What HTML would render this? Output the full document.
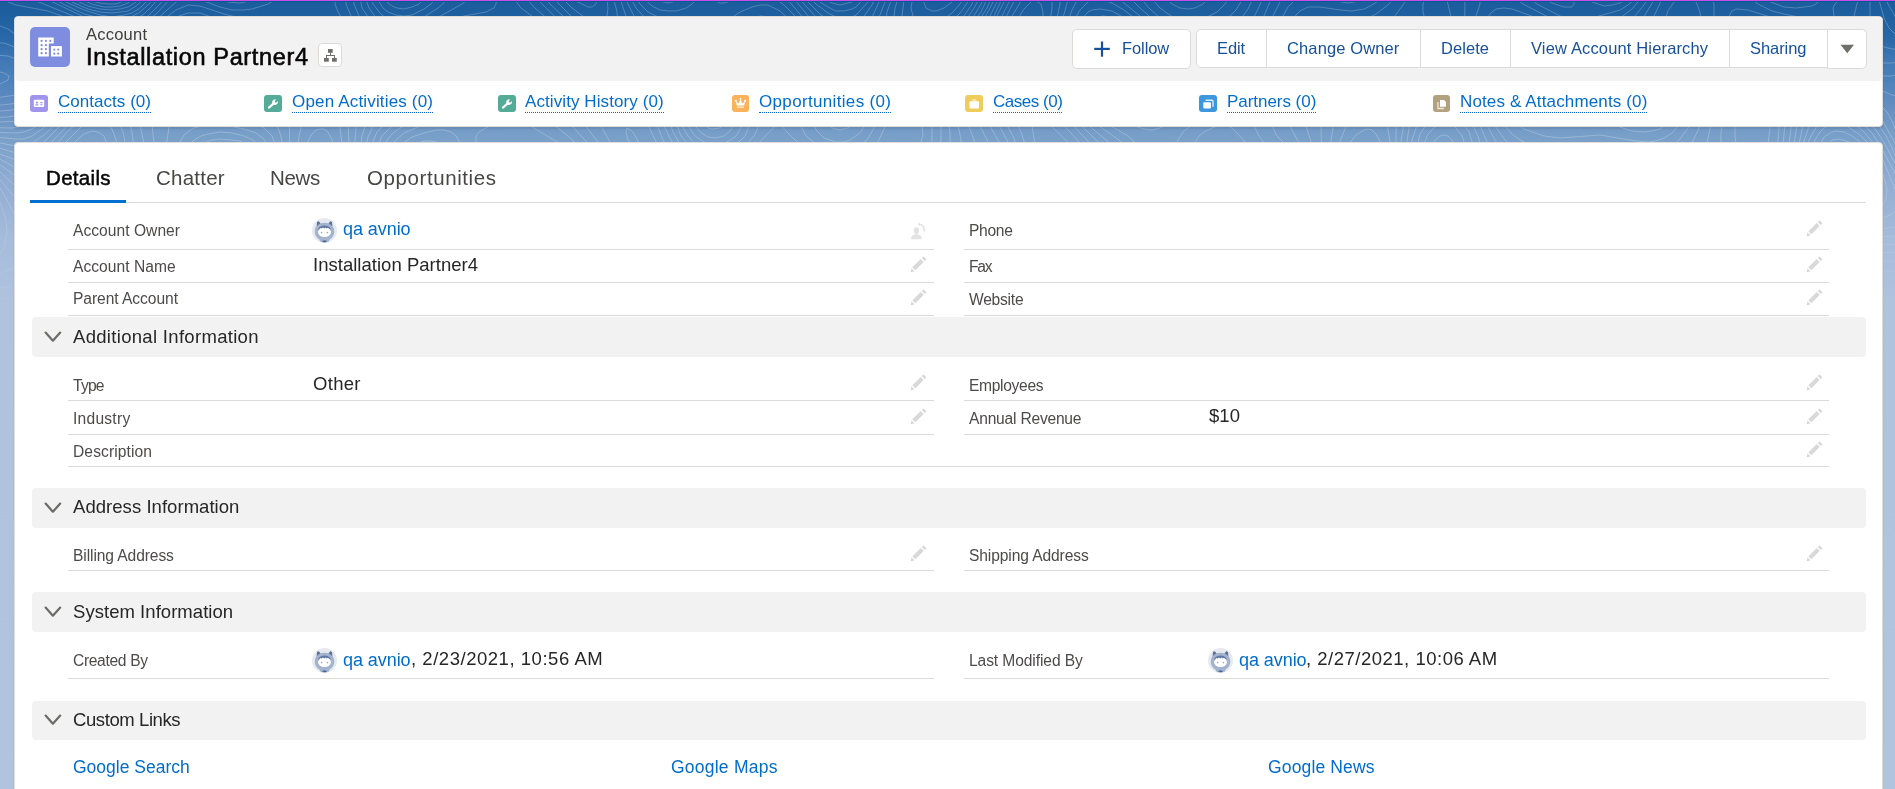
<!DOCTYPE html>
<html><head><meta charset="utf-8">
<style>
html,body{margin:0;padding:0;width:1895px;height:789px;overflow:hidden;font-family:"Liberation Sans",sans-serif;}
body{position:relative;background:linear-gradient(to bottom,#1a5c9c 0px,#1d5f9f 15px,#2a69a9 40px,#3f78b4 60px,#4c82bb 80px,#6890c2 110px,#779fc8 135px,#90acd2 180px,#a6bcdb 240px,#afc3df 300px,#b0c4df 789px);}
.a{position:absolute;}
.t{position:absolute;white-space:nowrap;will-change:transform;}
.card{position:absolute;background:#fff;border-radius:4px;box-shadow:0 2px 2px rgba(0,0,0,0.10);border:1px solid #e0dcd8;box-sizing:border-box;}
.div{position:absolute;height:1px;background:#dddbda;}
.sec{position:absolute;left:32px;width:1834px;height:40px;background:#f3f2f2;border-radius:4px;}
.btn{position:absolute;background:#fff;border:1px solid #dddbda;box-sizing:border-box;}
.vd{position:absolute;width:1px;background:#dddbda;}
.ico{position:absolute;border-radius:3px;}
</style></head><body>
<!--TOPO--><svg class="a" style="left:0;top:0" width="1895" height="340" viewBox="0 0 1895 340"><defs><linearGradient id="fg" x1="0" y1="0" x2="0" y2="1"><stop offset="0" stop-color="#fff" stop-opacity="1"/><stop offset="0.45" stop-color="#fff" stop-opacity="1"/><stop offset="0.95" stop-color="#fff" stop-opacity="0"/></linearGradient><mask id="fm"><rect width="1895" height="340" fill="url(#fg)"/></mask></defs><g mask="url(#fm)" fill="none" stroke="#ffffff" stroke-opacity="0.24" stroke-width="1"><path d="M83 -40 87 -32 92 -28 96 -26 104 -25 112 -28 116 -34 118 -40"/><path d="M78 -40 81 -32 88 -25 96 -21 104 -20 112 -22 116 -25 121 -32 122 -40"/><path d="M73 -40 76 -32 83 -24 92 -18 104 -16 112 -17 120 -23 125 -32 127 -40"/><path d="M1922 -40 1924 -35 1928 -33"/><path d="M69 -40 72 -31 80 -21 92 -15 104 -12 116 -15 123 -20 128 -28 130 -40"/><path d="M1914 -40 1916 -32 1919 -28 1924 -24 1928 -23"/><path d="M65 -40 69 -28 76 -20 90 -12 104 -9 116 -11 124 -16 131 -28 134 -40"/><path d="M1908 -40 1910 -32 1914 -24 1920 -19 1928 -16"/><path d="M60 -40 65 -28 76 -16 92 -8 108 -5 120 -9 128 -15 135 -28 137 -40"/><path d="M1903 -40 1906 -28 1912 -18 1920 -12 1928 -9"/><path d="M56 -40 60 -28 72 -16 80 -10 92 -5 108 -2 120 -5 130 -12 137 -24 140 -40"/><path d="M1899 -40 1901 -28 1908 -15 1916 -8 1928 -3"/><path d="M52 -40 54 -32 59 -24 72 -12 92 -2 108 1 120 -1 126 -4 132 -9 137 -16 141 -24 143 -40"/><path d="M1895 -40 1898 -24 1905 -12 1916 -1 1928 3"/><path d="M1073 208 1080 202 1086 192 1089 184 1089 172 1084 160 1078 152 1045 120 1040 112 1038 104 1036 69 1032 36 1031 32 1028 27 1024 28 1020 32 1008 52 1004 64 1004 80 1009 92 1026 112 1031 120 1037 156 1054 204 1060 211 1064 211 1073 208"/><path d="M48 -40 50 -32 54 -24 67 -12 88 -0 100 3 108 4 116 4 124 1 132 -4 136 -8 141 -16 144 -24 147 -40"/><path d="M826 -40 828 -33 832 -28 840 -26 844 -28 848 -31 852 -40"/><path d="M1890 -40 1892 -29 1895 -20 1904 -5 1916 6 1928 10"/><path d="M1195 8 1203 4 1210 -4 1211 -12 1208 -20 1200 -27 1192 -29 1180 -29 1172 -26 1166 -20 1164 -14 1164 -8 1168 -0 1172 4 1180 8 1188 9 1195 8"/><path d="M1067 224 1080 214 1091 200 1098 184 1099 172 1097 164 1092 156 1059 120 1050 104 1046 88 1042 60 1042 44 1043 12 1041 4 1036 1 1032 1 1024 9 1008 35 997 60 995 72 995 80 1000 96 1015 120 1021 132 1038 184 1044 212 1047 220 1051 224 1056 226 1060 226 1067 224"/><path d="M43 -40 45 -32 49 -24 57 -16 67 -8 80 -1 92 4 104 7 112 7 120 6 128 3 136 -3 140 -8 148 -24 150 -40"/><path d="M820 -40 821 -32 827 -24 832 -20 840 -18 846 -20 852 -25 856 -32 858 -40"/><path d="M1144 -40 1144 -24 1145 -16 1148 -8 1153 0 1160 8 1171 16 1180 19 1188 20 1200 19 1209 16 1217 12 1225 4 1230 -4 1233 -12 1233 -40"/><path d="M1886 -40 1890 -20 1900 -1 1912 12 1920 16 1928 17"/><path d="M1059 236 1068 232 1076 227 1093 208 1100 198 1105 188 1107 180 1107 172 1105 164 1100 154 1068 120 1060 108 1055 96 1050 76 1047 52 1048 36 1052 8 1052 0 1048 -11 1044 -14 1040 -16 1032 -12 1024 -4 1008 23 996 48 991 60 989 72 988 84 993 100 1013 136 1025 168 1032 192 1034 216 1036 224 1040 231 1044 234 1052 236 1059 236"/><path d="M38 -40 40 -32 44 -24 51 -16 62 -8 75 0 88 6 100 9 112 10 120 9 128 7 136 2 142 -4 150 -20 153 -40"/><path d="M815 -40 818 -28 823 -20 832 -14 840 -12 848 -14 856 -21 860 -28 863 -40"/><path d="M1126 -40 1127 -28 1131 -16 1139 -4 1149 8 1160 18 1171 24 1180 27 1192 28 1208 26 1220 22 1230 16 1236 10 1242 0 1246 -12 1249 -40"/><path d="M1882 -40 1883 -28 1886 -16 1892 -3 1899 8 1904 14 1912 21 1920 24 1928 25"/><path d="M1054 244 1064 242 1072 237 1080 230 1092 218 1102 204 1109 192 1113 180 1114 172 1112 160 1108 152 1072 116 1064 104 1059 92 1054 72 1052 48 1054 32 1060 4 1060 -8 1058 -16 1055 -24 1048 -33 1044 -36 1040 -35 1032 -26 1020 -9 1012 5 987 56 983 72 982 84 985 100 1007 140 1020 176 1023 192 1023 220 1025 228 1031 236 1036 240 1044 243 1054 244"/><path d="M33 -40 34 -32 39 -24 46 -16 56 -8 72 2 88 9 100 12 112 13 128 11 136 6 143 0 149 -8 154 -20 157 -40"/><path d="M810 -40 813 -28 820 -16 828 -10 840 -6 848 -8 858 -16 865 -28 867 -40"/><path d="M1027 -40 1022 -24 982 56 977 72 975 84 976 96 980 108 1000 144 1009 168 1014 188 1012 202 1008 209 1004 212 1000 212 972 193 964 190 956 190 944 193 935 200 928 209 923 220 919 232 918 248 918 260 922 272 928 284 932 287 936 288 940 287 948 283 964 270 992 243 1004 235 1012 236 1032 246 1044 250 1056 250 1068 246 1080 237 1096 220 1108 204 1117 188 1121 176 1122 168 1121 160 1118 152 1111 144 1088 125 1076 112 1066 96 1061 80 1057 60 1057 44 1059 32 1068 0 1070 -12 1065 -40"/><path d="M1110 -40 1112 -28 1118 -16 1128 -4 1140 8 1156 22 1168 30 1180 34 1192 35 1208 34 1224 30 1232 27 1240 20 1248 9 1254 -4 1258 -20 1260 -40"/><path d="M1877 -40 1878 -28 1882 -12 1888 4 1896 18 1902 24 1908 29 1916 32 1928 34"/><path d="M27 -40 28 -32 32 -24 39 -16 49 -8 68 3 84 10 100 15 112 17 124 15 132 13 140 8 148 0 153 -8 158 -20 162 -40"/><path d="M806 -40 808 -28 816 -14 828 -4 840 -1 848 -2 852 -4 860 -11 868 -24 872 -40"/><path d="M1020 -40 1018 -28 1013 -16 975 60 971 72 968 84 968 96 971 108 996 158 1000 172 1000 180 999 184 996 188 992 188 968 181 956 181 948 183 940 187 928 199 923 208 918 220 914 236 913 248 914 268 922 300 921 308 915 316 888 340 877 352 869 364 866 376"/><path d="M941 376 939 352 934 316 935 308 944 296 980 262 992 253 1000 249 1012 248 1036 254 1048 256 1060 254 1072 249 1088 235 1108 212 1119 196 1127 180 1130 164 1129 156 1126 148 1119 140 1092 121 1080 109 1071 96 1064 76 1062 52 1064 32 1072 10 1084 -13 1088 -17 1092 -18 1100 -15 1124 3 1156 29 1172 38 1180 41 1192 42 1224 40 1232 38 1240 34 1247 28 1252 21 1260 5 1266 -12 1270 -28 1271 -40"/><path d="M1329 -40 1332 -32 1336 -28 1344 -24 1352 -22 1360 -24 1367 -28 1372 -34 1374 -40"/><path d="M1873 -40 1874 -24 1878 -4 1884 18 1889 28 1896 35 1904 38 1916 41 1928 42"/><path d="M1308 284 1312 280 1316 270 1318 256 1317 240 1315 224 1312 208 1308 196 1300 181 1288 169 1260 154 1251 148 1232 128 1228 126 1220 125 1212 128 1204 132 1199 136 1194 144 1192 156 1206 212 1213 228 1220 236 1226 240 1252 253 1264 260 1292 283 1300 286 1308 284"/><path d="M1445 172 1451 168 1454 164 1456 152 1456 148 1452 140 1448 136 1444 135 1440 136 1435 140 1431 148 1430 156 1432 164 1436 170 1440 172 1445 172"/><path d="M20 -40 21 -32 25 -24 32 -16 44 -7 63 4 84 14 100 18 116 20 124 19 133 16 140 12 149 4 155 -4 161 -16 165 -28 167 -40"/><path d="M213 -40 216 -32 219 -28 224 -25 232 -22 240 -23 248 -28 252 -34 254 -40"/><path d="M561 -40 563 -32 568 -23 576 -15 580 -14 584 -15 586 -20 587 -40"/><path d="M802 -40 805 -24 812 -12 824 -1 832 3 840 5 852 2 864 -8 872 -24 876 -40"/><path d="M1015 -40 1013 -28 1007 -12 994 16 970 60 965 72 962 84 961 96 962 104 965 116 977 148 978 156 978 160 975 164 952 172 940 179 928 190 921 200 912 224 908 248 908 264 912 296 910 308 902 320 879 344 869 356 863 368 862 376"/><path d="M944 376 941 332 942 316 945 308 950 300 963 284 984 265 1000 256 1012 255 1040 260 1052 261 1064 258 1072 254 1088 241 1113 212 1127 192 1137 172 1141 156 1140 148 1137 144 1128 136 1104 122 1090 112 1079 100 1071 84 1067 64 1066 44 1072 24 1080 10 1088 2 1092 -0 1096 -1 1104 0 1112 3 1124 10 1160 38 1172 45 1188 48 1216 50 1240 53 1244 52 1248 49 1256 35 1279 -20 1285 -40"/><path d="M1313 -40 1314 -36 1319 -28 1329 -20 1340 -15 1352 -13 1363 -16 1372 -21 1380 -30 1384 -40"/><path d="M1764 -40 1765 -32 1769 -24 1776 -17 1784 -15 1788 -17 1792 -20 1795 -28 1797 -40"/><path d="M1867 -40 1870 0 1870 28 1872 35 1875 40 1884 47 1892 49 1928 50"/><path d="M-40 92 0 84 8 80 9 76 4 73 0 72 -40 74"/><path d="M1307 296 1312 293 1318 288 1322 280 1323 272 1322 244 1316 208 1308 186 1300 172 1288 159 1265 144 1259 136 1255 128 1254 120 1255 92 1252 83 1248 82 1244 84 1233 96 1224 104 1193 124 1183 132 1178 140 1177 144 1177 152 1192 186 1202 220 1206 228 1212 236 1222 244 1248 256 1260 264 1269 272 1284 288 1292 294 1300 297 1307 296"/><path d="M720 128 724 125 726 120 727 116 725 108 716 100 708 98 704 99 700 103 698 108 699 116 701 120 708 128 712 129 720 128"/><path d="M1452 184 1460 177 1464 169 1466 160 1466 148 1462 136 1456 128 1452 125 1444 123 1436 126 1428 134 1424 144 1422 160 1425 172 1432 182 1440 186 1444 186 1452 184"/><path d="M12 -40 14 -28 19 -20 27 -12 36 -6 84 17 100 22 116 23 128 22 136 19 144 14 152 6 160 -4 167 -16 172 -28 174 -40"/><path d="M200 -40 202 -32 205 -28 213 -20 224 -14 236 -13 248 -16 256 -22 263 -32 265 -40"/><path d="M551 -40 552 -32 555 -24 563 -12 576 1 588 7 592 7 596 4 597 0 598 -8 596 -40"/><path d="M797 -40 801 -24 805 -16 812 -6 820 2 828 7 836 11 844 11 852 9 856 7 868 -6 877 -24 880 -40"/><path d="M1011 -40 1008 -24 1000 -4 988 20 963 64 955 84 953 92 954 104 961 140 959 152 953 160 932 177 924 186 918 196 911 212 906 232 903 252 903 268 905 292 903 308 896 320 865 356 859 368 857 376"/><path d="M946 376 945 336 947 320 953 304 962 292 972 281 988 268 996 264 1004 261 1016 261 1040 265 1052 265 1064 263 1072 259 1084 250 1100 233 1125 204 1148 172 1156 166 1160 165 1168 167 1180 179 1188 194 1200 228 1205 236 1212 243 1220 248 1244 260 1256 267 1266 276 1283 296 1292 302 1300 305 1307 304 1316 300 1320 297 1324 292 1328 284 1330 272 1329 256 1323 224 1316 195 1305 168 1296 155 1277 136 1273 128 1272 116 1274 84 1267 52 1267 44 1268 32 1273 16 1280 2 1288 -11 1296 -18 1300 -19 1308 -19 1340 -6 1352 -5 1360 -7 1372 -12 1381 -20 1388 -29 1392 -40"/><path d="M1754 -40 1757 -24 1764 -13 1776 -5 1788 -2 1796 -4 1801 -8 1804 -12 1806 -20 1806 -40"/><path d="M1861 -40 1860 -8 1854 16 1853 24 1854 32 1860 44 1872 57 1884 63 1892 63 1928 58"/><path d="M1160 128 1152 130 1144 129 1112 119 1100 113 1092 107 1080 92 1072 72 1071 60 1071 48 1073 36 1076 28 1081 20 1088 12 1092 10 1100 9 1112 11 1128 20 1156 42 1168 50 1180 55 1210 60 1218 64 1221 68 1222 72 1222 80 1218 88 1212 96 1196 108 1160 128"/><path d="M-40 103 16 95 23 92 28 88 32 80 30 72 24 65 16 59 8 56 -4 55 -40 60"/><path d="M724 136 729 132 735 124 736 116 732 105 724 96 712 89 704 87 696 89 692 94 690 104 691 116 694 124 700 132 708 137 716 138 724 136"/><path d="M1457 196 1467 188 1472 180 1475 164 1474 148 1469 132 1460 120 1452 115 1448 114 1440 114 1432 118 1428 122 1420 134 1416 152 1418 168 1420 177 1424 186 1432 196 1436 198 1444 200 1457 196"/><path d="M798 376 797 364 792 352 786 340 780 333 768 323 736 308 724 300 710 284 691 248 684 240 676 235 640 218 600 191 576 180 560 175 544 175 532 177 504 187 492 187 484 184 476 178 466 168 452 151 444 144 432 141 424 141 416 144 408 149 402 156 389 196 381 208 368 224 364 232 362 240 363 248 368 264 372 270 380 277 388 281 396 281 400 278 404 272 410 252 416 240 423 232 429 228 452 218 484 206 496 206 508 212 524 225 541 244 556 268 562 280 564 288 565 296 562 304 556 312 540 328 535 336 532 348 531 376"/><path d="M2 -40 4 -28 7 -20 14 -12 24 -4 88 22 104 26 116 27 132 24 148 16 160 4 176 -18 184 -25 188 -26 192 -24 210 -12 220 -8 232 -5 240 -5 252 -8 263 -16 273 -28 277 -40"/><path d="M543 -40 547 -24 552 -15 560 -4 572 8 584 17 592 22 600 23 605 20 607 16 608 8 602 -40"/><path d="M793 -40 794 -32 798 -20 808 -4 816 4 828 13 836 17 844 19 852 17 856 15 868 2 880 -20 883 -32 884 -40"/><path d="M1007 -40 1002 -20 992 4 980 27 954 68 947 84 945 100 950 132 950 144 943 156 918 184 909 204 902 232 898 252 898 268 899 292 896 308 887 324 860 356 854 368 852 376"/><path d="M949 376 948 340 951 320 954 312 961 300 976 283 992 271 1004 267 1016 266 1052 270 1064 268 1072 264 1080 259 1092 248 1144 189 1152 182 1160 179 1168 181 1172 184 1179 192 1184 200 1196 231 1205 244 1216 252 1240 263 1252 270 1263 280 1284 305 1292 309 1304 311 1314 308 1324 301 1331 292 1335 284 1336 276 1335 264 1324 212 1316 182 1306 156 1291 128 1288 120 1285 80 1278 44 1279 28 1283 16 1288 7 1295 0 1300 -3 1312 -5 1336 1 1348 3 1360 1 1372 -4 1383 -12 1391 -20 1398 -32 1400 -40"/><path d="M1745 -40 1747 -28 1749 -20 1754 -12 1760 -5 1768 1 1776 4 1784 7 1796 8 1812 6 1816 4 1820 0 1821 -4 1816 -40"/><path d="M1853 -40 1852 -24 1849 -12 1844 -5 1835 4 1833 8 1834 16 1837 24 1852 50 1860 60 1868 68 1876 74 1884 76 1892 76 1916 69 1928 67"/><path d="M1696 36 1700 28 1701 20 1700 12 1696 2 1692 -3 1688 -6 1684 -7 1680 -5 1676 -1 1668 11 1665 20 1666 28 1672 35 1680 38 1688 39 1696 36"/><path d="M1140 116 1120 115 1104 109 1092 100 1085 92 1081 84 1075 64 1076 44 1078 36 1082 28 1092 19 1096 17 1104 16 1112 18 1120 21 1136 32 1168 59 1176 63 1196 70 1200 72 1203 76 1203 80 1200 88 1191 96 1177 104 1160 111 1140 116"/><path d="M-40 109 11 104 24 101 32 97 37 92 40 87 42 80 41 72 36 64 24 53 12 46 4 43 -4 43 -40 49"/><path d="M723 144 732 139 736 136 741 128 743 120 741 108 733 96 720 86 704 78 696 76 692 77 688 79 685 84 683 92 683 108 687 124 695 136 704 142 712 145 723 144"/><path d="M848 128 853 124 857 116 860 100 858 92 856 87 852 83 848 83 840 86 832 96 827 108 825 116 828 124 832 128 840 130 848 128"/><path d="M1614 332 1628 331 1668 332 1692 328 1708 323 1724 316 1737 308 1747 300 1756 289 1762 276 1767 260 1770 240 1770 224 1768 213 1764 203 1756 191 1752 188 1748 187 1744 188 1693 212 1680 215 1672 216 1660 215 1648 211 1636 204 1616 188 1608 184 1600 182 1528 183 1504 184 1496 183 1492 181 1488 174 1478 136 1472 124 1466 116 1456 108 1448 105 1436 107 1428 112 1420 120 1416 128 1412 140 1411 152 1412 168 1418 188 1424 202 1439 224 1441 228 1440 232 1432 244 1428 253 1427 260 1429 268 1432 271 1439 272 1444 270 1448 267 1452 260 1454 252 1453 244 1449 232 1449 228 1452 224 1464 217 1472 216 1476 217 1496 229 1508 233 1540 240 1548 243 1556 248 1564 256 1570 268 1581 312 1588 329 1592 333 1596 335 1614 332"/><path d="M1753 168 1756 167 1760 163 1764 157 1768 144 1770 128 1768 120 1762 112 1756 108 1748 107 1744 108 1740 112 1737 116 1735 124 1735 136 1736 144 1740 155 1748 166 1753 168"/><path d="M1928 121 1919 124 1917 128 1916 136 1920 148 1924 151 1928 153"/><path d="M804 376 802 364 798 352 792 340 784 328 776 320 768 314 737 300 724 290 712 272 700 244 693 236 687 232 640 212 592 181 564 168 552 165 544 164 532 166 508 174 500 175 492 174 484 171 475 164 468 156 456 136 451 132 444 130 436 130 424 133 412 137 402 144 396 152 382 192 362 220 358 228 356 236 355 244 356 252 360 264 368 278 380 291 392 298 404 300 411 296 413 292 417 260 421 248 426 240 436 232 460 221 472 218 484 216 500 218 516 227 531 240 543 256 551 272 555 288 552 300 532 323 526 332 523 348 524 376"/><path d="M-13 -40 -11 -28 -7 -16 0 -5 8 2 16 5 48 11 92 27 104 30 116 31 132 29 144 23 156 14 176 -7 184 -12 188 -12 196 -10 216 -2 228 2 240 3 254 0 264 -5 277 -16 287 -28 292 -40"/><path d="M535 -40 537 -28 541 -20 545 -12 555 0 572 17 588 30 600 37 608 38 612 36 616 33 618 24 617 12 608 -24 607 -40"/><path d="M787 -40 790 -28 793 -20 806 0 820 14 832 23 840 28 848 30 852 29 860 22 872 5 884 -20 888 -40"/><path d="M1003 -40 999 -20 987 8 972 32 947 68 939 84 937 100 941 128 941 140 936 152 914 180 906 200 894 252 893 268 893 296 890 308 881 324 855 356 849 368 847 376"/><path d="M951 376 952 340 955 320 964 303 980 285 996 274 1008 271 1020 271 1052 274 1064 273 1072 270 1088 258 1120 222 1140 201 1148 195 1156 191 1164 191 1168 192 1176 200 1193 236 1202 248 1212 255 1236 266 1248 273 1260 284 1276 304 1284 311 1292 315 1304 316 1316 313 1328 304 1336 296 1340 288 1342 280 1342 272 1312 145 1299 104 1295 76 1289 44 1290 28 1296 15 1300 11 1308 7 1320 7 1340 10 1352 11 1364 9 1372 5 1384 -3 1397 -16 1404 -28 1408 -40"/><path d="M1675 -40 1675 -32 1671 -20 1654 16 1651 28 1655 36 1664 43 1676 48 1692 52 1700 51 1704 49 1708 45 1712 36 1714 24 1714 4 1703 -28 1701 -40"/><path d="M1734 -40 1737 -20 1741 -12 1747 -4 1758 4 1772 11 1784 14 1808 19 1820 24 1832 35 1860 73 1868 81 1880 90 1892 95 1900 97 1904 96 1917 84 1928 80"/><path d="M-40 115 12 110 28 106 36 102 43 96 48 88 50 80 48 68 43 60 24 41 8 29 0 26 -4 27 -28 34 -40 36"/><path d="M809 376 807 364 803 352 796 336 788 323 780 313 772 307 740 291 728 281 720 265 714 240 708 232 692 224 656 213 640 206 584 169 564 158 552 153 544 151 536 152 512 162 500 164 492 162 482 156 479 152 476 144 476 136 479 132 484 129 500 121 507 116 511 108 511 100 507 84 502 76 496 68 484 60 476 58 468 58 463 60 457 64 452 72 450 80 447 104 444 111 440 116 432 121 404 133 396 140 392 145 388 153 382 176 377 188 370 200 358 216 352 226 349 236 350 248 356 269 364 284 372 295 400 328 404 331 412 331 428 328 436 324 438 320 438 312 427 284 424 268 425 260 427 252 436 240 444 234 456 228 468 224 480 222 492 223 500 225 516 233 527 244 536 256 544 272 546 284 543 296 523 320 517 332 515 344 517 376"/><path d="M717 152 724 151 732 147 740 141 745 136 750 124 751 116 748 108 743 100 736 92 712 73 700 66 692 63 684 63 681 64 677 68 675 72 674 84 676 108 681 124 688 136 696 145 708 151 717 152"/><path d="M850 140 860 133 866 124 870 112 872 96 870 84 867 76 860 66 852 61 848 61 840 67 828 83 816 104 813 112 813 120 816 130 824 138 836 142 844 142 850 140"/><path d="M1608 376 1608 360 1609 352 1614 344 1620 340 1636 336 1680 334 1708 326 1728 318 1745 308 1754 300 1762 288 1769 268 1775 236 1776 216 1771 180 1778 140 1779 128 1778 120 1775 112 1769 104 1760 98 1748 93 1740 93 1733 96 1729 100 1724 112 1721 132 1721 148 1724 168 1722 180 1716 188 1702 200 1686 208 1672 210 1660 209 1648 204 1637 196 1621 180 1608 174 1596 173 1564 175 1548 174 1516 172 1504 168 1500 166 1495 160 1481 128 1474 116 1464 106 1452 98 1440 96 1432 99 1424 105 1416 114 1409 128 1406 148 1409 176 1419 212 1421 224 1419 236 1413 264 1415 276 1423 284 1432 288 1440 288 1448 286 1460 276 1478 252 1484 247 1492 245 1504 244 1524 245 1536 247 1548 252 1556 258 1561 264 1565 272 1568 284 1573 332 1574 376"/><path d="M1928 103 1908 103 1904 109 1903 120 1906 136 1912 151 1920 160 1928 163"/><path d="M1928 276 1896 271 1884 272 1876 276 1872 281 1870 288 1871 296 1874 300 1884 308 1904 315 1928 318"/><path d="M-40 119 8 117 24 114 38 108 50 96 56 84 57 72 52 60 36 40 32 32 31 24 34 20 44 18 52 19 96 33 108 35 120 35 132 33 144 28 156 20 176 2 184 -2 196 -2 220 7 232 10 244 10 252 9 268 4 296 -13 316 -16 324 -19 332 -29 335 -40"/><path d="M528 -40 530 -28 535 -16 540 -8 550 4 592 43 604 50 616 52 628 48 632 44 633 40 630 28 615 -16 611 -40"/><path d="M781 -40 783 -28 792 -12 804 4 830 32 834 40 835 44 835 52 830 64 808 100 802 112 801 120 802 128 806 136 816 144 828 148 840 150 856 147 867 140 874 128 881 108 883 96 882 84 878 72 866 48 865 36 869 24 889 -20 893 -40"/><path d="M999 -40 997 -28 994 -16 981 12 968 31 935 72 929 84 927 96 932 128 932 140 927 152 909 176 903 192 889 256 887 296 885 304 878 320 846 360 841 368 839 376"/><path d="M954 376 954 344 958 324 965 308 972 298 980 290 992 281 1000 277 1008 276 1020 275 1052 279 1064 278 1072 275 1080 271 1088 264 1116 232 1136 212 1148 203 1156 200 1164 201 1172 207 1178 216 1190 240 1199 252 1211 260 1232 269 1244 276 1256 287 1273 308 1284 317 1296 321 1308 320 1320 316 1332 307 1345 292 1348 284 1349 276 1348 268 1336 232 1325 184 1322 160 1321 128 1307 84 1301 48 1300 40 1302 32 1306 24 1316 19 1324 19 1356 21 1368 18 1376 14 1388 5 1406 -16 1413 -28 1416 -40"/><path d="M1666 -40 1665 -28 1660 -12 1654 0 1642 20 1639 28 1639 36 1644 42 1654 48 1674 56 1700 65 1712 67 1716 65 1718 60 1728 18 1732 11 1736 9 1748 10 1812 30 1820 35 1828 43 1856 80 1887 112 1892 121 1904 149 1912 162 1920 169 1928 171"/><path d="M-40 -5 -36 0 -37 4 -40 7"/><path d="M817 376 814 364 810 352 796 322 788 308 776 296 750 280 741 272 739 268 738 260 740 244 739 236 736 228 732 224 727 220 716 217 680 213 660 209 644 203 628 194 564 146 532 127 527 120 514 84 504 68 496 59 488 54 480 51 472 50 459 52 452 56 448 61 444 72 439 100 432 111 424 117 400 128 392 134 388 139 383 148 377 172 373 184 366 196 351 216 345 228 343 236 343 244 347 260 356 282 373 312 377 324 377 336 374 376"/><path d="M731 156 740 150 747 144 754 136 758 128 759 116 754 104 747 96 736 85 696 53 688 49 680 48 672 49 664 52 660 56 660 64 673 116 681 136 692 149 704 157 716 160 724 159 731 156"/><path d="M1617 376 1618 364 1619 356 1624 349 1628 345 1640 341 1684 337 1716 327 1733 320 1748 312 1758 304 1767 292 1773 272 1782 228 1782 212 1780 176 1785 124 1783 112 1779 104 1768 93 1756 86 1740 79 1728 77 1724 76 1720 80 1706 148 1705 172 1703 180 1699 188 1692 196 1684 201 1672 204 1660 202 1652 198 1645 192 1632 175 1624 169 1616 166 1600 164 1568 167 1552 166 1528 164 1512 159 1504 154 1500 149 1484 120 1475 108 1460 94 1448 88 1436 86 1428 89 1420 97 1412 107 1404 124 1401 140 1403 168 1413 220 1411 236 1403 268 1403 276 1405 280 1411 288 1424 296 1436 300 1444 300 1452 297 1460 292 1484 264 1496 256 1508 253 1520 252 1532 254 1544 258 1551 264 1556 270 1560 279 1562 288 1566 376"/><path d="M1928 266 1892 261 1884 261 1876 263 1868 269 1862 276 1859 284 1858 292 1859 300 1862 304 1868 310 1876 315 1901 324 1916 327 1928 328"/><path d="M-6 376 -8 372 -16 369 -40 371"/><path d="M-40 124 20 121 36 115 50 104 59 92 63 84 64 76 64 68 61 60 50 40 49 36 50 32 52 31 56 30 64 30 104 39 116 39 128 38 140 35 148 31 176 10 188 5 200 6 224 14 240 18 280 18 285 20 288 24 294 40 300 48 304 52 312 56 324 59 336 59 344 57 352 52 355 44 353 36 338 12 335 4 336 -4 343 -28 344 -40"/><path d="M521 -40 522 -28 525 -20 534 -4 592 53 604 61 612 63 636 66 644 70 648 73 653 80 659 92 673 132 680 144 688 153 700 163 712 169 720 169 732 165 744 157 754 148 776 125 780 124 779 120 776 119 767 108 751 92 724 68 704 48 696 42 684 38 656 36 648 32 644 29 634 16 624 -4 618 -24 616 -40"/><path d="M770 -40 774 -28 782 -16 818 28 823 36 825 44 825 52 823 60 815 76 800 98 780 120 780 124 787 132 795 140 804 147 820 154 832 156 844 157 856 156 864 153 872 149 877 144 892 112 904 92 908 95 912 102 919 116 922 124 923 136 920 144 904 168 900 180 892 220 883 260 880 296 877 308 868 324 844 352 832 362 828 362 824 360 820 355 812 341 795 300 788 290 769 272 764 264 760 256 752 226 746 216 740 210 732 205 720 201 684 205 664 204 648 199 634 192 612 176 568 136 540 114 532 104 511 68 500 54 492 48 484 44 468 42 460 43 452 46 444 51 440 56 436 68 433 92 427 104 418 112 392 126 382 136 377 148 372 172 367 184 360 196 345 216 339 228 338 240 340 256 348 276 363 308 368 324 368 336 367 376"/><path d="M995 -40 993 -28 988 -12 981 4 972 19 952 43 904 91 903 88 882 56 877 44 876 36 878 20 895 -24 898 -40"/><path d="M956 376 957 344 961 324 969 308 976 299 984 291 996 284 1012 280 1024 280 1056 284 1064 284 1072 282 1080 277 1088 270 1116 238 1128 226 1140 216 1152 210 1160 210 1168 214 1175 224 1188 247 1196 256 1208 264 1232 274 1242 280 1252 289 1272 313 1284 322 1296 325 1308 324 1320 320 1337 308 1350 296 1355 288 1358 280 1357 276 1340 232 1330 188 1328 160 1333 128 1333 120 1331 112 1323 92 1319 80 1316 60 1316 44 1320 38 1328 34 1368 34 1376 32 1384 28 1392 20 1418 -16 1423 -28 1425 -40"/><path d="M1660 -40 1658 -24 1652 -8 1644 5 1625 28 1623 36 1624 40 1627 44 1632 48 1672 63 1691 72 1700 80 1704 88 1705 100 1703 116 1699 128 1686 156 1685 164 1684 180 1683 184 1680 188 1676 191 1668 192 1660 189 1643 168 1632 161 1620 157 1600 155 1568 158 1552 158 1532 155 1516 150 1505 140 1485 112 1472 97 1444 73 1432 67 1428 67 1424 69 1420 74 1402 108 1397 120 1396 132 1396 148 1406 208 1406 220 1403 240 1392 272 1393 280 1395 284 1408 296 1424 306 1436 312 1448 313 1456 309 1464 303 1488 274 1500 265 1508 262 1520 261 1532 262 1540 265 1548 272 1551 276 1555 288 1556 300 1555 332 1558 376"/><path d="M1625 376 1628 360 1632 353 1636 350 1648 346 1676 342 1696 337 1736 323 1752 316 1763 308 1770 300 1774 292 1778 276 1788 220 1789 208 1786 168 1791 128 1791 116 1788 104 1780 93 1768 83 1744 68 1736 60 1734 52 1734 40 1736 32 1740 27 1744 24 1756 23 1788 30 1805 36 1818 44 1829 56 1853 88 1882 120 1908 166 1916 174 1928 179"/><path d="M245 376 247 368 259 336 262 324 264 312 266 276 279 236 279 220 277 208 263 168 256 152 248 145 240 141 232 140 220 139 212 140 204 143 196 149 188 157 157 200 128 232 122 244 120 256 123 272 127 280 133 288 148 300 187 320 203 332 214 344 222 356 229 368 231 376"/><path d="M1928 258 1892 252 1880 253 1872 256 1864 261 1855 272 1849 284 1847 296 1849 304 1852 309 1859 316 1867 320 1904 334 1928 338"/><path d="M7 376 4 368 0 364 -7 360 -20 358 -40 359"/><path d="M-40 127 12 128 24 126 32 123 44 116 52 109 65 92 71 76 72 68 71 48 74 44 84 43 116 44 136 41 152 34 176 17 188 13 200 13 228 23 264 32 272 37 292 56 308 64 320 67 332 68 344 67 353 64 360 60 364 56 367 48 365 40 351 16 346 4 346 -8 351 -40"/><path d="M513 -40 516 -20 524 -4 535 8 564 33 592 65 604 72 636 79 643 84 648 89 654 100 665 128 671 140 680 154 698 176 700 184 698 188 692 192 683 196 672 197 656 196 637 188 624 179 607 164 572 126 540 101 532 91 512 58 499 44 488 37 472 34 456 35 445 40 435 48 430 56 428 64 426 88 420 100 411 108 388 121 377 132 372 144 368 168 364 180 357 192 338 216 333 228 332 240 335 256 356 308 361 324 362 340 362 376"/><path d="M715 -40 718 -28 720 -22 724 -17 728 -15 736 -14 756 -19 764 -19 768 -17 776 -12 788 0 805 20 814 32 817 40 817 48 813 64 801 84 788 96 784 98 776 99 768 96 760 91 728 64 708 39 700 32 688 28 660 26 648 21 636 8 628 -7 622 -24 620 -40"/><path d="M991 -40 988 -24 983 -8 974 8 964 23 948 40 932 52 920 59 908 62 900 59 892 51 888 44 885 32 885 24 887 12 900 -24 903 -40"/><path d="M1655 -40 1651 -20 1644 -5 1632 9 1612 24 1608 28 1606 36 1608 44 1610 48 1616 54 1624 57 1652 63 1668 68 1684 77 1693 88 1696 96 1696 108 1692 120 1688 128 1680 139 1672 147 1664 152 1656 154 1608 146 1596 146 1564 150 1548 149 1528 144 1520 140 1512 134 1457 72 1449 60 1440 36 1436 29 1424 16 1423 12 1423 4 1432 -20 1435 -40"/><path d="M1633 376 1636 362 1640 357 1644 354 1656 350 1700 340 1756 321 1772 312 1776 308 1780 300 1794 220 1795 208 1792 180 1791 164 1797 124 1798 112 1795 100 1788 90 1780 82 1756 64 1749 56 1748 52 1747 44 1752 37 1756 35 1764 34 1784 37 1803 44 1815 52 1824 61 1846 92 1878 124 1886 136 1900 164 1908 175 1916 182 1928 186"/><path d="M1376 270 1372 270 1364 266 1356 256 1351 248 1341 224 1334 188 1333 172 1334 156 1347 124 1349 116 1346 104 1336 82 1334 68 1336 61 1340 56 1348 53 1364 53 1380 57 1388 62 1392 66 1397 76 1397 88 1389 112 1387 124 1400 200 1401 224 1398 236 1392 251 1384 263 1376 270"/><path d="M254 376 256 364 268 321 272 276 285 236 285 220 267 160 260 146 253 140 244 136 232 133 220 132 208 134 201 136 194 140 188 146 156 193 124 228 118 240 115 252 116 260 119 272 129 288 144 301 184 322 198 332 205 340 214 352 220 364 222 376"/><path d="M1928 250 1888 244 1876 246 1868 249 1856 258 1846 272 1839 288 1835 304 1837 312 1840 316 1848 322 1908 343 1928 348"/><path d="M15 376 10 364 7 360 0 355 -8 352 -16 351 -40 351"/><path d="M-40 131 16 133 24 132 32 129 48 119 66 100 76 84 84 60 88 55 96 52 124 49 140 45 152 40 176 24 188 20 196 20 204 21 252 39 264 46 287 64 304 72 320 74 336 75 348 74 360 71 368 67 376 60 379 56 380 48 376 40 359 16 354 4 353 -8 356 -40"/><path d="M504 -40 505 -28 509 -12 515 0 521 8 548 28 560 38 569 48 584 69 592 78 604 84 624 87 632 89 640 94 644 99 650 108 663 140 680 168 682 176 682 180 679 184 673 188 660 189 644 185 628 175 609 156 580 119 572 112 548 97 540 90 532 79 511 44 504 36 496 30 480 26 464 26 448 30 436 36 425 44 419 52 417 60 418 80 415 92 408 101 384 115 374 124 368 137 362 168 358 180 351 192 332 216 325 228 324 236 326 248 350 308 355 324 357 344 358 376"/><path d="M706 -40 709 -16 712 -6 716 1 720 3 724 3 756 -6 768 -5 776 -1 784 5 796 17 804 28 809 40 810 48 809 56 806 64 800 74 788 85 780 88 768 87 756 81 745 72 736 64 726 52 712 24 708 19 700 17 676 19 664 19 656 16 648 12 640 4 632 -9 626 -24 624 -40"/><path d="M986 -40 985 -28 980 -12 972 4 964 16 952 29 940 38 928 45 916 48 908 47 900 42 896 36 893 24 895 8 907 -28 909 -40"/><path d="M1650 -40 1649 -28 1647 -20 1643 -12 1636 -2 1628 5 1620 10 1592 18 1590 20 1590 24 1597 52 1600 60 1604 65 1612 68 1640 69 1660 72 1675 80 1680 84 1685 92 1687 100 1687 108 1684 116 1680 124 1672 133 1664 138 1656 141 1648 142 1636 141 1600 135 1560 138 1544 136 1524 129 1508 118 1474 84 1465 72 1459 60 1456 48 1452 21 1446 -4 1446 -40"/><path d="M1536 -40 1534 -20 1535 -12 1537 -8 1544 -1 1552 3 1564 7 1572 7 1574 4 1574 0 1562 -28 1559 -40"/><path d="M1928 241 1892 236 1880 237 1868 241 1857 248 1849 256 1824 293 1816 302 1808 306 1804 306 1800 304 1796 299 1794 292 1792 272 1793 256 1801 216 1800 204 1796 176 1796 160 1799 144 1805 116 1806 104 1804 96 1800 88 1771 60 1770 56 1770 52 1776 49 1788 49 1800 54 1809 60 1816 67 1834 92 1864 118 1876 130 1885 144 1900 173 1908 184 1916 190 1928 194"/><path d="M260 376 262 360 273 320 279 272 292 236 293 228 292 220 278 184 270 152 264 139 256 133 244 129 224 125 208 125 193 128 184 135 166 168 156 183 146 196 124 219 118 228 112 240 111 252 112 260 115 272 125 288 133 296 143 304 181 324 196 335 204 344 211 356 214 364 216 376"/><path d="M1372 256 1364 254 1360 251 1350 236 1346 224 1341 208 1337 180 1339 164 1344 150 1356 135 1364 130 1368 129 1372 130 1376 134 1384 149 1392 180 1396 212 1394 228 1388 244 1380 253 1372 256"/><path d="M1811 376 1812 360 1817 348 1824 339 1830 336 1836 334 1852 335 1868 338 1887 344 1916 357 1928 360"/><path d="M20 376 19 368 15 360 8 352 1 348 -12 345 -40 345"/><path d="M493 -40 497 -4 496 4 494 8 486 12 464 16 452 20 440 25 412 40 404 43 400 43 392 40 380 31 370 20 362 8 359 -8 361 -40"/><path d="M699 -40 699 -12 696 0 692 4 686 8 676 11 668 11 660 10 652 6 641 -4 632 -21 628 -40"/><path d="M982 -40 980 -28 976 -14 969 0 961 12 952 21 940 30 928 35 920 36 912 34 908 32 903 24 902 16 904 0 914 -28 916 -40"/><path d="M1524 -40 1522 -16 1525 -8 1527 -4 1537 4 1564 18 1573 24 1581 36 1586 52 1586 72 1582 84 1578 92 1570 104 1563 112 1556 116 1548 119 1532 119 1520 115 1512 111 1500 102 1488 92 1472 72 1466 60 1464 48 1465 4 1458 -24 1457 -40"/><path d="M1646 -40 1643 -24 1640 -16 1634 -8 1628 -2 1620 3 1612 5 1604 6 1592 2 1581 -8 1572 -24 1568 -40"/><path d="M784 77 776 79 764 77 749 68 737 56 730 44 728 32 729 24 734 16 740 12 752 7 760 5 768 5 780 11 794 24 801 36 802 44 802 52 800 60 796 66 791 72 784 77"/><path d="M-40 135 -16 136 16 139 24 139 32 136 48 125 65 108 78 92 92 68 96 64 104 59 132 54 144 50 176 31 188 27 196 27 204 29 240 43 256 52 283 72 300 79 324 82 352 82 368 79 392 69 396 69 400 70 404 76 405 84 404 88 397 96 376 109 367 120 362 136 357 168 352 181 340 198 308 232 307 228 296 211 287 192 281 176 275 144 272 136 264 128 256 124 248 122 192 112 180 113 173 116 170 120 166 148 160 164 148 184 120 216 112 228 107 240 107 256 110 268 113 276 121 288 128 296 144 308 180 327 196 340 206 356 211 368 212 376"/><path d="M1644 132 1632 131 1620 127 1608 121 1602 116 1599 108 1600 100 1605 92 1615 84 1623 80 1632 78 1648 77 1664 82 1671 88 1675 92 1677 96 1678 104 1676 112 1672 119 1667 124 1660 129 1652 131 1644 132"/><path d="M664 177 656 179 644 176 632 168 623 160 611 144 602 128 596 112 596 104 603 100 616 99 628 101 636 106 644 117 665 160 668 168 667 172 664 177"/><path d="M1928 229 1896 227 1880 229 1868 233 1856 239 1848 246 1820 278 1812 282 1808 281 1804 278 1800 268 1800 260 1806 224 1807 212 1801 176 1801 156 1803 144 1808 129 1816 111 1820 106 1824 104 1828 104 1836 106 1852 115 1864 125 1872 133 1880 145 1904 191 1916 202 1928 205"/><path d="M26 376 24 367 19 356 12 348 4 343 -4 340 -12 338 -40 339"/><path d="M1829 376 1831 364 1836 355 1844 348 1856 345 1872 348 1892 356 1908 368 1912 376"/><path d="M475 -40 476 -16 474 -8 472 -4 462 4 428 23 416 29 404 32 396 31 384 25 376 18 369 8 366 0 364 -8 366 -40"/><path d="M692 -40 691 -20 688 -8 680 -0 668 3 656 0 649 -4 644 -10 636 -24 633 -40"/><path d="M976 -40 972 -18 968 -8 960 4 952 13 944 19 936 23 928 24 920 23 916 21 913 16 911 8 913 -4 921 -28 924 -40"/><path d="M1514 -40 1509 -16 1510 -8 1513 -4 1523 4 1554 20 1565 28 1574 40 1578 52 1578 60 1576 68 1567 84 1552 99 1544 104 1536 106 1528 107 1520 105 1504 98 1492 89 1484 80 1474 64 1471 52 1470 40 1472 28 1480 4 1480 -4 1471 -28 1469 -40"/><path d="M1642 -40 1639 -24 1632 -13 1627 -8 1620 -3 1608 -1 1596 -4 1586 -12 1578 -24 1574 -40"/><path d="M780 68 772 70 763 68 752 61 744 52 739 40 740 32 744 24 749 20 760 16 772 17 783 24 790 32 793 40 793 52 788 62 780 68"/><path d="M-40 138 -16 140 16 146 24 146 32 143 44 135 60 120 79 100 96 79 104 71 112 67 144 59 156 53 176 40 188 35 196 35 204 37 229 48 250 60 276 80 288 86 300 88 340 91 359 96 362 100 362 104 356 128 353 164 349 176 342 188 332 198 320 207 312 210 308 209 300 203 291 188 286 172 281 136 278 128 272 120 260 115 221 108 184 96 176 95 167 96 160 99 155 104 152 110 151 116 154 144 152 160 142 180 116 212 108 224 102 240 102 256 109 276 117 288 124 296 140 308 176 328 192 341 202 356 207 368 208 376"/><path d="M1820 258 1816 258 1813 252 1814 216 1806 176 1806 156 1809 140 1818 124 1824 118 1828 116 1836 116 1844 118 1856 125 1864 132 1874 144 1881 156 1888 172 1896 192 1898 204 1898 208 1892 214 1852 232 1841 240 1824 255 1820 258"/><path d="M640 153 636 150 628 140 626 132 627 128 632 131 636 137 641 148 640 153"/><path d="M30 376 28 365 24 356 16 345 8 339 0 335 -8 333 -40 333"/><path d="M1844 376 1846 368 1848 364 1856 358 1864 357 1876 360 1884 364 1888 368 1893 376"/><path d="M454 -40 455 -16 452 -8 447 0 438 8 424 17 412 22 404 24 396 23 388 20 380 13 373 4 370 -4 369 -12 370 -40"/><path d="M685 -40 683 -24 680 -15 673 -8 664 -6 656 -8 647 -16 641 -28 638 -40"/><path d="M969 -40 968 -30 965 -20 957 -4 952 2 944 8 936 11 932 11 926 8 923 0 924 -8 931 -28 934 -40"/><path d="M1638 -40 1636 -28 1628 -15 1620 -9 1608 -7 1596 -11 1588 -18 1582 -28 1579 -40"/><path d="M1536 96 1528 98 1520 97 1504 91 1490 80 1484 72 1480 64 1477 48 1479 32 1485 20 1492 12 1496 9 1504 8 1512 9 1540 19 1552 26 1560 32 1568 43 1570 56 1569 64 1565 72 1560 80 1552 88 1544 93 1536 96"/><path d="M-40 141 -14 144 16 153 28 152 36 148 44 142 84 102 104 85 112 80 124 77 132 77 140 80 141 84 138 108 139 120 144 144 143 160 140 168 133 180 109 212 102 224 97 240 98 256 105 276 113 288 120 296 136 309 176 331 190 344 200 360 204 376"/><path d="M324 196 316 199 312 199 304 196 296 185 291 172 290 160 289 108 292 104 304 99 320 98 335 100 343 104 348 112 349 148 346 168 343 176 338 184 332 190 324 196"/><path d="M1844 225 1836 227 1832 226 1828 223 1824 216 1816 195 1810 172 1810 156 1815 140 1820 132 1824 128 1832 124 1840 124 1848 127 1860 135 1868 143 1874 152 1880 164 1887 188 1886 200 1881 208 1868 216 1844 225"/><path d="M34 376 32 364 27 352 20 342 8 332 0 328 -8 327 -40 327"/><path d="M442 -40 442 -16 438 -4 431 4 424 9 412 15 404 16 396 15 388 12 383 8 378 0 375 -12 375 -40"/><path d="M677 -40 676 -32 673 -24 668 -18 664 -17 656 -19 652 -22 648 -28 645 -40"/><path d="M1633 -40 1631 -28 1625 -20 1616 -14 1608 -13 1600 -15 1592 -22 1586 -32 1585 -40"/><path d="M1536 88 1524 91 1512 88 1498 80 1488 68 1483 56 1483 48 1484 40 1489 28 1496 21 1500 19 1508 17 1516 17 1536 23 1552 32 1556 36 1561 44 1563 56 1560 68 1550 80 1536 88"/><path d="M-40 145 -16 148 16 160 28 161 40 154 72 121 92 104 100 99 108 96 116 97 120 99 125 108 132 132 134 148 133 160 131 168 125 180 102 212 94 228 91 244 94 260 99 272 106 284 120 300 136 312 172 332 186 344 192 352 197 360 200 376"/><path d="M320 190 312 190 304 184 298 172 296 160 299 136 303 120 306 116 311 112 320 110 328 111 332 113 336 118 340 128 343 152 341 164 336 176 328 185 320 190"/><path d="M1852 212 1840 213 1832 209 1824 198 1816 177 1814 164 1818 148 1824 137 1832 132 1836 131 1844 132 1852 136 1860 142 1871 156 1877 172 1879 188 1876 197 1868 206 1852 212"/><path d="M39 376 37 364 32 352 24 339 12 327 4 323 -8 320 -40 321"/><path d="M433 -40 433 -20 431 -12 428 -6 419 4 412 7 404 9 397 8 392 6 388 3 383 -4 380 -16 380 -40"/><path d="M1629 -40 1627 -32 1624 -27 1620 -23 1612 -19 1604 -20 1598 -24 1592 -32 1590 -40"/><path d="M-40 148 -28 149 -15 152 -4 157 16 168 24 171 28 171 32 170 40 164 67 132 84 117 92 112 100 109 108 110 112 112 118 120 123 132 126 148 125 160 123 168 117 180 95 212 88 224 86 232 85 240 88 256 99 280 108 292 115 300 132 313 168 333 182 344 189 352 193 360 197 376"/><path d="M324 177 316 179 312 178 307 172 305 164 305 152 308 141 312 134 316 130 320 129 324 129 328 132 332 140 335 152 334 160 332 168 328 174 324 177"/><path d="M1856 201 1844 202 1836 199 1828 190 1823 180 1820 168 1821 156 1824 148 1832 140 1840 139 1852 143 1862 152 1869 164 1872 176 1870 188 1865 196 1856 201"/><path d="M43 376 40 360 33 344 24 331 12 320 4 316 -4 314 -40 315"/><path d="M424 -40 424 -24 421 -12 415 -4 408 -0 404 0 396 -2 392 -5 388 -11 386 -20 386 -40"/><path d="M1622 -40 1620 -33 1616 -29 1612 -27 1608 -27 1604 -29 1600 -32 1597 -40"/><path d="M-40 152 -28 153 -16 156 -4 162 20 179 28 181 32 181 40 177 44 172 64 144 80 128 88 123 96 120 104 121 108 124 112 129 116 140 117 152 116 160 114 168 109 180 87 212 80 224 77 236 80 252 85 264 94 280 111 300 128 313 168 336 180 346 189 360 193 376"/><path d="M46 376 44 360 38 344 28 328 16 314 8 309 -4 306 -40 309"/><path d="M414 -40 412 -21 408 -15 404 -14 400 -15 396 -20 394 -40"/><path d="M-40 155 -24 158 -12 163 0 172 20 190 28 194 36 195 40 194 46 188 64 156 77 140 84 134 92 131 98 132 104 136 107 144 108 152 106 168 96 186 70 220 67 232 69 244 74 256 83 272 102 296 121 312 160 334 174 344 181 352 186 360 189 368 190 376"/><path d="M50 376 48 360 40 339 28 318 16 304 8 299 0 298 -40 303"/><path d="M-40 159 -31 160 -20 164 -12 168 -4 175 34 220 48 240 96 296 116 313 158 336 169 344 177 352 182 360 185 368 187 376"/><path d="M54 376 52 360 46 340 30 308 20 293 12 288 4 287 -28 294 -40 295"/><path d="M-40 163 -28 165 -20 168 -10 176 -0 188 9 204 17 220 21 236 23 252 22 260 19 264 13 268 -20 283 -40 287"/><path d="M-40 167 -32 168 -23 172 -16 177 -10 184 -3 196 2 208 6 220 7 232 4 248 -4 260 -20 272 -30 276 -40 278"/><path d="M-40 172 -27 176 -20 181 -14 188 -7 204 -4 224 -7 240 -14 252 -20 258 -28 263 -40 266"/><path d="M-40 178 -32 180 -28 183 -20 191 -15 204 -14 216 -16 228 -20 237 -28 245 -33 248 -40 250"/><path d="M-40 186 -35 188 -28 194 -25 200 -24 208 -26 216 -28 222 -32 226 -40 230"/></g></svg><!--/TOPO-->
<div class="a" style="left:0;top:0;width:1895px;height:1px;background:#c64fec"></div>
<div class="a" style="left:0;top:1px;width:1895px;height:1px;background:#0e568f"></div>

<!-- header card -->
<div class="card" style="left:14px;top:16px;width:1869px;height:111px;overflow:hidden">
  <div class="a" style="left:0;top:0;width:1867px;height:64px;background:#f3f2f2;border-radius:3px 3px 4px 4px"></div>
</div>
<!-- account icon -->
<div class="a" style="left:30px;top:27px;width:40px;height:40px;border-radius:5px;background:#7f8de1">
<svg width="40" height="40" viewBox="0 0 40 40" style="position:absolute;left:0;top:0">
<path fill="#fff" d="M8.2 10.4H23.7V16.4H18.8V29.5H8.2Z"/>
<rect x="21" y="19.1" width="10.9" height="10.4" fill="#fff"/>
<g fill="#7f8de1">
<circle cx="11.6" cy="13.9" r="1.1"/><circle cx="15.95" cy="13.9" r="1.1"/><circle cx="20.3" cy="13.9" r="1.1"/>
<circle cx="11.6" cy="18.2" r="1.1"/><circle cx="15.95" cy="18.2" r="1.1"/>
<circle cx="11.6" cy="22.2" r="1.1"/><circle cx="15.95" cy="22.2" r="1.1"/>
<circle cx="11.6" cy="26.2" r="1.1"/><circle cx="15.95" cy="26.2" r="1.1"/>
<circle cx="24.3" cy="22.6" r="1.1"/><circle cx="28.2" cy="22.6" r="1.1"/>
<circle cx="24.3" cy="26.7" r="1.1"/><circle cx="28.2" cy="26.7" r="1.1"/>
</g></svg></div>
<!-- hierarchy btn -->
<div class="a" style="left:318px;top:43px;width:24px;height:24px;box-sizing:border-box;border:1px solid #dddbda;border-radius:4px;background:#fff">
<svg width="24" height="24" viewBox="0 0 24 24" style="position:absolute;left:-1px;top:-1px">
<g fill="#706e6b"><rect x="10" y="6" width="4.7" height="3.8"/><rect x="12" y="9.5" width="1" height="3"/><rect x="8" y="12" width="9" height="1"/><rect x="8" y="12" width="1" height="3"/><rect x="16" y="12" width="1" height="3"/><rect x="6" y="15" width="4.8" height="3.7"/><rect x="14" y="15" width="4.8" height="3.7"/></g></svg></div>

<!-- buttons -->
<div class="btn" style="left:1072px;top:29px;width:119px;height:40px;border-radius:5px"></div>
<svg class="a" style="left:1094px;top:41px" width="16" height="16" viewBox="0 0 16 16"><g fill="#16509a"><rect x="6.9" y="0.5" width="2.2" height="15.2"/><rect x="0.2" y="6.8" width="15.6" height="2.2"/></g></svg>
<div class="btn" style="left:1196px;top:29px;width:640px;height:39px;border-radius:5px 0 0 5px"></div>
<div class="vd" style="left:1266px;top:30px;height:37px"></div>
<div class="vd" style="left:1420px;top:30px;height:37px"></div>
<div class="vd" style="left:1510px;top:30px;height:37px"></div>
<div class="vd" style="left:1729px;top:30px;height:37px"></div>
<div class="btn" style="left:1827px;top:29px;width:40px;height:40px;border-radius:0 5px 5px 0"></div>
<svg class="a" style="left:1840px;top:44px" width="15" height="10" viewBox="0 0 15 10"><path d="M0.5 0.8H14L7.25 9.2Z" fill="#706e6b"/></svg>

<!-- related link icons -->
<div class="ico" style="left:30px;top:95px;width:18px;height:17px;background:#a094ed">
<svg width="18" height="17" viewBox="0 0 18 17" style="position:absolute;left:0;top:0"><rect x="3.8" y="4.8" width="10.4" height="7.2" rx="1" fill="#fff"/><g fill="#a094ed"><circle cx="6.9" cy="7.6" r="1.1"/><rect x="5.2" y="9.2" width="3.4" height="1.4" rx="0.7"/><rect x="9.8" y="7.2" width="3" height="1"/><rect x="10.2" y="9.2" width="2.2" height="1"/></g></svg></div>
<div class="ico" style="left:264px;top:95px;width:18px;height:17px;background:#54ab98">
<svg width="18" height="17" viewBox="0 0 18 17" style="position:absolute;left:0;top:0"><g transform="translate(9.4 8.4) scale(0.88) translate(-9.3 -9)"><path d="M4.2 13.8 L9.3 9.3" stroke="#fff" stroke-width="2.4" stroke-linecap="round"/><path d="M8.2 9.6 C7.2 7.2 8.8 4.6 11.3 4.4 L12.2 4.8 L10.8 6.6 L11.5 7.9 L13 7.9 L14.4 6.3 L14.6 7.6 C14.2 9.8 11.8 11.1 9.6 10.6 Z" fill="#fff"/></g></svg></div>
<div class="ico" style="left:498px;top:95px;width:18px;height:17px;background:#54ab98">
<svg width="18" height="17" viewBox="0 0 18 17" style="position:absolute;left:0;top:0"><g transform="translate(9.4 8.4) scale(0.88) translate(-9.3 -9)"><path d="M4.2 13.8 L9.3 9.3" stroke="#fff" stroke-width="2.4" stroke-linecap="round"/><path d="M8.2 9.6 C7.2 7.2 8.8 4.6 11.3 4.4 L12.2 4.8 L10.8 6.6 L11.5 7.9 L13 7.9 L14.4 6.3 L14.6 7.6 C14.2 9.8 11.8 11.1 9.6 10.6 Z" fill="#fff"/></g></svg></div>
<div class="ico" style="left:732px;top:95px;width:17px;height:17px;background:#f9b35a">
<svg width="17" height="17" viewBox="0 0 17 17" style="position:absolute;left:0;top:0"><g fill="#fff"><circle cx="3.9" cy="5.8" r="1.1"/><circle cx="13.1" cy="5.8" r="1.1"/><circle cx="8.5" cy="3.9" r="0.9"/><path d="M3.8 6.2 L6.5 8.6 L8.5 4.2 L10.5 8.6 L13.2 6.2 L12.2 10.4 H4.8 Z"/></g><rect x="5" y="11.4" width="7" height="1.6" fill="#fde3c2"/></svg></div>
<div class="ico" style="left:965px;top:95px;width:18px;height:17px;background:#f0cc5a">
<svg width="18" height="17" viewBox="0 0 18 17" style="position:absolute;left:0;top:0"><rect x="4.5" y="6.2" width="9.5" height="7.2" rx="0.8" fill="#fff"/><rect x="7.2" y="4.3" width="4" height="1.5" fill="#fbeab8"/></svg></div>
<div class="ico" style="left:1199px;top:95px;width:18px;height:17px;background:#3d97dd">
<svg width="18" height="17" viewBox="0 0 18 17" style="position:absolute;left:0;top:0"><path d="M6.5 5.2 H13 A1 1 0 0 1 14 6.2 V11.8" stroke="#d8ebf8" stroke-width="1.4" fill="none"/><rect x="4.3" y="7.3" width="7.6" height="6.3" rx="1" fill="#fff"/></svg></div>
<div class="ico" style="left:1433px;top:95px;width:17px;height:17px;background:#b2a17e">
<svg width="17" height="17" viewBox="0 0 17 17" style="position:absolute;left:0;top:0"><path d="M7 5 H11 L13 7 V11.8 H7Z" fill="#fff"/><path d="M5 7 V13.5 H11" stroke="#eee8dc" stroke-width="1.3" fill="none"/></svg></div>

<!-- details card -->
<div class="card" style="left:14px;top:142px;width:1869px;height:700px"></div>
<div class="div" style="left:30px;top:202px;width:1836px"></div>
<div class="a" style="left:30px;top:200px;width:96px;height:3px;background:#0070d2"></div>

<!-- field dividers -->
<div class="div" style="left:68px;top:249px;width:866px"></div>
<div class="div" style="left:964px;top:249px;width:865px"></div>
<div class="div" style="left:68px;top:282px;width:866px"></div>
<div class="div" style="left:964px;top:282px;width:865px"></div>
<div class="div" style="left:68px;top:315px;width:866px"></div>
<div class="div" style="left:964px;top:315px;width:865px"></div>

<div class="sec" style="top:317px"></div>
<div class="div" style="left:68px;top:400px;width:866px"></div>
<div class="div" style="left:964px;top:400px;width:865px"></div>
<div class="div" style="left:68px;top:434px;width:866px"></div>
<div class="div" style="left:964px;top:434px;width:865px"></div>
<div class="div" style="left:68px;top:466px;width:1761px"></div>

<div class="sec" style="top:488px"></div>
<div class="div" style="left:68px;top:570px;width:866px"></div>
<div class="div" style="left:964px;top:570px;width:865px"></div>

<div class="sec" style="top:592px"></div>
<div class="div" style="left:68px;top:678px;width:866px"></div>
<div class="div" style="left:964px;top:678px;width:865px"></div>

<div class="sec" style="top:701px;height:39px"></div>

<!--ICONS-->
<svg class="a" style="left:312px;top:218px" width="25" height="25" viewBox="0 0 25 25">
<circle cx="12.5" cy="12.5" r="12.5" fill="#e6eaf0"/>
<path d="M5 4.2 Q5.6 3 7 3.6 L8.6 5.2 Q12.5 4.2 16.4 5.2 L18 3.6 Q19.4 3 20 4.2 L20.4 7.8 Q22.6 10.6 22.2 14.6 Q21.6 19.4 17.6 21.4 L16.8 23.6 Q12.5 25 8.2 23.6 L7.4 21.4 Q3.4 19.4 2.8 14.6 Q2.4 10.6 4.6 7.8Z" fill="#a3b3cd"/>
<path d="M5 4.2 Q5.6 3 7 3.6 L8.2 5.4 Q6.2 6.4 4.8 8Z M20 4.2 Q19.4 3 18 3.6 L16.8 5.4 Q18.8 6.4 20.2 8Z" fill="#5b7399"/>
<ellipse cx="12.5" cy="13.6" rx="6.6" ry="5.4" fill="#fff"/>
<path d="M5.9 13.2 Q6 8 12.5 7.6 Q19 8 19.1 13.2 Q18.3 10.8 16.8 10.6 L15.9 9.7 L14.8 10.6 L13.6 9.4 L12.3 10.5 L11 9.5 L9.8 10.5 L8.6 9.9 Q6.8 11 5.9 13.2Z" fill="#5f789f"/>
<ellipse cx="9.6" cy="14.6" rx="0.9" ry="0.8" fill="#9aa8c0"/><ellipse cx="15.4" cy="14.6" rx="0.9" ry="0.8" fill="#9aa8c0"/>
<path d="M10.1 24 Q10.4 22.4 12.5 22.3 Q14.6 22.4 14.9 24 Q12.5 24.6 10.1 24Z" fill="#4f6a94"/>
</svg>
<svg class="a" style="left:312px;top:648px" width="25" height="25" viewBox="0 0 25 25">
<circle cx="12.5" cy="12.5" r="12.5" fill="#e6eaf0"/>
<path d="M5 4.2 Q5.6 3 7 3.6 L8.6 5.2 Q12.5 4.2 16.4 5.2 L18 3.6 Q19.4 3 20 4.2 L20.4 7.8 Q22.6 10.6 22.2 14.6 Q21.6 19.4 17.6 21.4 L16.8 23.6 Q12.5 25 8.2 23.6 L7.4 21.4 Q3.4 19.4 2.8 14.6 Q2.4 10.6 4.6 7.8Z" fill="#a3b3cd"/>
<path d="M5 4.2 Q5.6 3 7 3.6 L8.2 5.4 Q6.2 6.4 4.8 8Z M20 4.2 Q19.4 3 18 3.6 L16.8 5.4 Q18.8 6.4 20.2 8Z" fill="#5b7399"/>
<ellipse cx="12.5" cy="13.6" rx="6.6" ry="5.4" fill="#fff"/>
<path d="M5.9 13.2 Q6 8 12.5 7.6 Q19 8 19.1 13.2 Q18.3 10.8 16.8 10.6 L15.9 9.7 L14.8 10.6 L13.6 9.4 L12.3 10.5 L11 9.5 L9.8 10.5 L8.6 9.9 Q6.8 11 5.9 13.2Z" fill="#5f789f"/>
<ellipse cx="9.6" cy="14.6" rx="0.9" ry="0.8" fill="#9aa8c0"/><ellipse cx="15.4" cy="14.6" rx="0.9" ry="0.8" fill="#9aa8c0"/>
<path d="M10.1 24 Q10.4 22.4 12.5 22.3 Q14.6 22.4 14.9 24 Q12.5 24.6 10.1 24Z" fill="#4f6a94"/>
</svg>
<svg class="a" style="left:1208px;top:648px" width="25" height="25" viewBox="0 0 25 25">
<circle cx="12.5" cy="12.5" r="12.5" fill="#e6eaf0"/>
<path d="M5 4.2 Q5.6 3 7 3.6 L8.6 5.2 Q12.5 4.2 16.4 5.2 L18 3.6 Q19.4 3 20 4.2 L20.4 7.8 Q22.6 10.6 22.2 14.6 Q21.6 19.4 17.6 21.4 L16.8 23.6 Q12.5 25 8.2 23.6 L7.4 21.4 Q3.4 19.4 2.8 14.6 Q2.4 10.6 4.6 7.8Z" fill="#a3b3cd"/>
<path d="M5 4.2 Q5.6 3 7 3.6 L8.2 5.4 Q6.2 6.4 4.8 8Z M20 4.2 Q19.4 3 18 3.6 L16.8 5.4 Q18.8 6.4 20.2 8Z" fill="#5b7399"/>
<ellipse cx="12.5" cy="13.6" rx="6.6" ry="5.4" fill="#fff"/>
<path d="M5.9 13.2 Q6 8 12.5 7.6 Q19 8 19.1 13.2 Q18.3 10.8 16.8 10.6 L15.9 9.7 L14.8 10.6 L13.6 9.4 L12.3 10.5 L11 9.5 L9.8 10.5 L8.6 9.9 Q6.8 11 5.9 13.2Z" fill="#5f789f"/>
<ellipse cx="9.6" cy="14.6" rx="0.9" ry="0.8" fill="#9aa8c0"/><ellipse cx="15.4" cy="14.6" rx="0.9" ry="0.8" fill="#9aa8c0"/>
<path d="M10.1 24 Q10.4 22.4 12.5 22.3 Q14.6 22.4 14.9 24 Q12.5 24.6 10.1 24Z" fill="#4f6a94"/>
</svg>
<svg class="a" style="left:43px;top:331px" width="20" height="12" viewBox="0 0 20 12"><path d="M2.6 1.6 L9.9 9.7 L17.2 1.6" stroke="#6b6b68" stroke-width="2.2" fill="none" stroke-linecap="round" stroke-linejoin="round"/></svg>
<svg class="a" style="left:43px;top:502px" width="20" height="12" viewBox="0 0 20 12"><path d="M2.6 1.6 L9.9 9.7 L17.2 1.6" stroke="#6b6b68" stroke-width="2.2" fill="none" stroke-linecap="round" stroke-linejoin="round"/></svg>
<svg class="a" style="left:43px;top:606px" width="20" height="12" viewBox="0 0 20 12"><path d="M2.6 1.6 L9.9 9.7 L17.2 1.6" stroke="#6b6b68" stroke-width="2.2" fill="none" stroke-linecap="round" stroke-linejoin="round"/></svg>
<svg class="a" style="left:43px;top:714px" width="20" height="12" viewBox="0 0 20 12"><path d="M2.6 1.6 L9.9 9.7 L17.2 1.6" stroke="#6b6b68" stroke-width="2.2" fill="none" stroke-linecap="round" stroke-linejoin="round"/></svg>
<svg class="a" style="left:909px;top:222px" width="18" height="18" viewBox="0 0 18 18"><g fill="#e3e3e3"><ellipse cx="7.4" cy="8.6" rx="2.7" ry="3.3"/><rect x="6.3" y="11" width="2.2" height="2.2"/><path d="M2.1 17.2 V16 Q2.3 13.2 6 12.6 H8.8 Q12.5 13.2 12.7 16 V17.2Z"/><path d="M8.6 2.4 L11 0.6 L11 4.2Z"/><path d="M13.4 7.4 L16.8 7.4 L15.1 9.8Z"/></g><path d="M10.6 2.4 Q14.9 2.6 15.1 7.6" stroke="#e3e3e3" stroke-width="1.5" fill="none"/></svg>
<svg class="a" style="left:910px;top:256px" width="17" height="17" viewBox="0 0 17 17"><g fill="#d9d9d9"><path d="M0.6 16.2 L1.5 12.3 L4.6 15.4Z"/><path d="M2.4 11.3 L10.7 3 L13.7 6 L5.4 14.3Z"/><path d="M11.6 2.1 L12.8 0.9 Q13.5 0.3 14.2 0.9 L15.9 2.6 Q16.5 3.3 15.9 4 L14.6 5.1Z"/></g></svg>
<svg class="a" style="left:910px;top:289px" width="17" height="17" viewBox="0 0 17 17"><g fill="#d9d9d9"><path d="M0.6 16.2 L1.5 12.3 L4.6 15.4Z"/><path d="M2.4 11.3 L10.7 3 L13.7 6 L5.4 14.3Z"/><path d="M11.6 2.1 L12.8 0.9 Q13.5 0.3 14.2 0.9 L15.9 2.6 Q16.5 3.3 15.9 4 L14.6 5.1Z"/></g></svg>
<svg class="a" style="left:910px;top:374px" width="17" height="17" viewBox="0 0 17 17"><g fill="#d9d9d9"><path d="M0.6 16.2 L1.5 12.3 L4.6 15.4Z"/><path d="M2.4 11.3 L10.7 3 L13.7 6 L5.4 14.3Z"/><path d="M11.6 2.1 L12.8 0.9 Q13.5 0.3 14.2 0.9 L15.9 2.6 Q16.5 3.3 15.9 4 L14.6 5.1Z"/></g></svg>
<svg class="a" style="left:910px;top:408px" width="17" height="17" viewBox="0 0 17 17"><g fill="#d9d9d9"><path d="M0.6 16.2 L1.5 12.3 L4.6 15.4Z"/><path d="M2.4 11.3 L10.7 3 L13.7 6 L5.4 14.3Z"/><path d="M11.6 2.1 L12.8 0.9 Q13.5 0.3 14.2 0.9 L15.9 2.6 Q16.5 3.3 15.9 4 L14.6 5.1Z"/></g></svg>
<svg class="a" style="left:910px;top:545px" width="17" height="17" viewBox="0 0 17 17"><g fill="#d9d9d9"><path d="M0.6 16.2 L1.5 12.3 L4.6 15.4Z"/><path d="M2.4 11.3 L10.7 3 L13.7 6 L5.4 14.3Z"/><path d="M11.6 2.1 L12.8 0.9 Q13.5 0.3 14.2 0.9 L15.9 2.6 Q16.5 3.3 15.9 4 L14.6 5.1Z"/></g></svg>
<svg class="a" style="left:1806px;top:220px" width="17" height="17" viewBox="0 0 17 17"><g fill="#d9d9d9"><path d="M0.6 16.2 L1.5 12.3 L4.6 15.4Z"/><path d="M2.4 11.3 L10.7 3 L13.7 6 L5.4 14.3Z"/><path d="M11.6 2.1 L12.8 0.9 Q13.5 0.3 14.2 0.9 L15.9 2.6 Q16.5 3.3 15.9 4 L14.6 5.1Z"/></g></svg>
<svg class="a" style="left:1806px;top:256px" width="17" height="17" viewBox="0 0 17 17"><g fill="#d9d9d9"><path d="M0.6 16.2 L1.5 12.3 L4.6 15.4Z"/><path d="M2.4 11.3 L10.7 3 L13.7 6 L5.4 14.3Z"/><path d="M11.6 2.1 L12.8 0.9 Q13.5 0.3 14.2 0.9 L15.9 2.6 Q16.5 3.3 15.9 4 L14.6 5.1Z"/></g></svg>
<svg class="a" style="left:1806px;top:289px" width="17" height="17" viewBox="0 0 17 17"><g fill="#d9d9d9"><path d="M0.6 16.2 L1.5 12.3 L4.6 15.4Z"/><path d="M2.4 11.3 L10.7 3 L13.7 6 L5.4 14.3Z"/><path d="M11.6 2.1 L12.8 0.9 Q13.5 0.3 14.2 0.9 L15.9 2.6 Q16.5 3.3 15.9 4 L14.6 5.1Z"/></g></svg>
<svg class="a" style="left:1806px;top:374px" width="17" height="17" viewBox="0 0 17 17"><g fill="#d9d9d9"><path d="M0.6 16.2 L1.5 12.3 L4.6 15.4Z"/><path d="M2.4 11.3 L10.7 3 L13.7 6 L5.4 14.3Z"/><path d="M11.6 2.1 L12.8 0.9 Q13.5 0.3 14.2 0.9 L15.9 2.6 Q16.5 3.3 15.9 4 L14.6 5.1Z"/></g></svg>
<svg class="a" style="left:1806px;top:408px" width="17" height="17" viewBox="0 0 17 17"><g fill="#d9d9d9"><path d="M0.6 16.2 L1.5 12.3 L4.6 15.4Z"/><path d="M2.4 11.3 L10.7 3 L13.7 6 L5.4 14.3Z"/><path d="M11.6 2.1 L12.8 0.9 Q13.5 0.3 14.2 0.9 L15.9 2.6 Q16.5 3.3 15.9 4 L14.6 5.1Z"/></g></svg>
<svg class="a" style="left:1806px;top:441px" width="17" height="17" viewBox="0 0 17 17"><g fill="#d9d9d9"><path d="M0.6 16.2 L1.5 12.3 L4.6 15.4Z"/><path d="M2.4 11.3 L10.7 3 L13.7 6 L5.4 14.3Z"/><path d="M11.6 2.1 L12.8 0.9 Q13.5 0.3 14.2 0.9 L15.9 2.6 Q16.5 3.3 15.9 4 L14.6 5.1Z"/></g></svg>
<svg class="a" style="left:1806px;top:545px" width="17" height="17" viewBox="0 0 17 17"><g fill="#d9d9d9"><path d="M0.6 16.2 L1.5 12.3 L4.6 15.4Z"/><path d="M2.4 11.3 L10.7 3 L13.7 6 L5.4 14.3Z"/><path d="M11.6 2.1 L12.8 0.9 Q13.5 0.3 14.2 0.9 L15.9 2.6 Q16.5 3.3 15.9 4 L14.6 5.1Z"/></g></svg>
<!--/ICONS-->
<div class='t' style='left:85.7px;top:25.27px;font-size:16.5px;line-height:18.43px;font-weight:400;color:#3e3e3c;letter-spacing:0.229px;'>Account</div>
<div class='t' style='left:86.0px;top:43.53px;font-size:23.5px;line-height:26.25px;font-weight:400;color:#080707;letter-spacing:0.649px;-webkit-text-stroke:0.6px #080707;'>Installation Partner4</div>
<div class='t' style='left:1121.7px;top:39.27px;font-size:16.5px;line-height:18.43px;font-weight:400;color:#16509a;letter-spacing:-0.078px;'>Follow</div>
<div class='t' style='left:1216.9px;top:39.27px;font-size:16.5px;line-height:18.43px;font-weight:400;color:#16509a;letter-spacing:-0.112px;'>Edit</div>
<div class='t' style='left:1287.2px;top:39.27px;font-size:16.5px;line-height:18.43px;font-weight:400;color:#16509a;letter-spacing:0.120px;'>Change Owner</div>
<div class='t' style='left:1441.3px;top:39.27px;font-size:16.5px;line-height:18.43px;font-weight:400;color:#16509a;letter-spacing:0.059px;'>Delete</div>
<div class='t' style='left:1531.4px;top:39.27px;font-size:16.5px;line-height:18.43px;font-weight:400;color:#16509a;letter-spacing:0.150px;'>View Account Hierarchy</div>
<div class='t' style='left:1750.0px;top:39.27px;font-size:16.5px;line-height:18.43px;font-weight:400;color:#16509a;letter-spacing:-0.062px;'>Sharing</div>
<div class='t' style='left:58.0px;top:91.61px;font-size:17px;line-height:18.99px;font-weight:400;color:#006dcc;letter-spacing:0.037px;border-bottom:1px dotted #006dcc;padding-bottom:1px;'>Contacts (0)</div>
<div class='t' style='left:291.7px;top:91.61px;font-size:17px;line-height:18.99px;font-weight:400;color:#006dcc;letter-spacing:0.169px;border-bottom:1px dotted #006dcc;padding-bottom:1px;'>Open Activities (0)</div>
<div class='t' style='left:525.3px;top:91.61px;font-size:17px;line-height:18.99px;font-weight:400;color:#006dcc;letter-spacing:0.086px;border-bottom:1px dotted #006dcc;padding-bottom:1px;'>Activity History (0)</div>
<div class='t' style='left:759.1px;top:91.61px;font-size:17px;line-height:18.99px;font-weight:400;color:#006dcc;letter-spacing:0.336px;border-bottom:1px dotted #006dcc;padding-bottom:1px;'>Opportunities (0)</div>
<div class='t' style='left:992.9px;top:91.61px;font-size:17px;line-height:18.99px;font-weight:400;color:#006dcc;letter-spacing:-0.473px;border-bottom:1px dotted #006dcc;padding-bottom:1px;'>Cases (0)</div>
<div class='t' style='left:1226.6px;top:91.61px;font-size:17px;line-height:18.99px;font-weight:400;color:#006dcc;letter-spacing:-0.041px;border-bottom:1px dotted #006dcc;padding-bottom:1px;'>Partners (0)</div>
<div class='t' style='left:1460.3px;top:91.61px;font-size:17px;line-height:18.99px;font-weight:400;color:#006dcc;letter-spacing:0.139px;border-bottom:1px dotted #006dcc;padding-bottom:1px;'>Notes &amp; Attachments (0)</div>
<div class='t' style='left:46.0px;top:167.15px;font-size:20.5px;line-height:22.90px;font-weight:400;color:#080707;letter-spacing:0.321px;-webkit-text-stroke:0.5px #080707;'>Details</div>
<div class='t' style='left:156.4px;top:167.15px;font-size:20.5px;line-height:22.90px;font-weight:400;color:#474645;letter-spacing:0.228px;'>Chatter</div>
<div class='t' style='left:270.3px;top:167.15px;font-size:20.5px;line-height:22.90px;font-weight:400;color:#474645;letter-spacing:-0.355px;'>News</div>
<div class='t' style='left:366.6px;top:167.15px;font-size:20.5px;line-height:22.90px;font-weight:400;color:#474645;letter-spacing:0.589px;'>Opportunities</div>
<div class='t' style='left:73.3px;top:221.88px;font-size:15.6px;line-height:17.43px;font-weight:400;color:#4d4b49;letter-spacing:0.033px;'>Account Owner</div>
<div class='t' style='left:73.3px;top:257.88px;font-size:15.6px;line-height:17.43px;font-weight:400;color:#4d4b49;letter-spacing:0.029px;'>Account Name</div>
<div class='t' style='left:73.3px;top:290.38px;font-size:15.6px;line-height:17.43px;font-weight:400;color:#4d4b49;letter-spacing:-0.059px;'>Parent Account</div>
<div class='t' style='left:969.3px;top:221.88px;font-size:15.6px;line-height:17.43px;font-weight:400;color:#4d4b49;letter-spacing:-0.298px;'>Phone</div>
<div class='t' style='left:969.3px;top:257.88px;font-size:15.6px;line-height:17.43px;font-weight:400;color:#4d4b49;letter-spacing:-1.250px;'>Fax</div>
<div class='t' style='left:969.3px;top:290.68px;font-size:15.6px;line-height:17.43px;font-weight:400;color:#4d4b49;letter-spacing:-0.244px;'>Website</div>
<div class='t' style='left:342.5px;top:219.01px;font-size:18px;line-height:20.11px;font-weight:400;color:#006dcc;letter-spacing:-0.066px;'>qa avnio</div>
<div class='t' style='left:313.0px;top:255.26px;font-size:18.5px;line-height:20.66px;font-weight:400;color:#262626;letter-spacing:0.023px;'>Installation Partner4</div>
<div class='t' style='left:73.2px;top:327.26px;font-size:18.5px;line-height:20.66px;font-weight:400;color:#262626;letter-spacing:0.312px;'>Additional Information</div>
<div class='t' style='left:73.3px;top:376.88px;font-size:15.6px;line-height:17.43px;font-weight:400;color:#4d4b49;letter-spacing:-0.771px;'>Type</div>
<div class='t' style='left:73.3px;top:410.18px;font-size:15.6px;line-height:17.43px;font-weight:400;color:#4d4b49;letter-spacing:0.245px;'>Industry</div>
<div class='t' style='left:73.3px;top:443.18px;font-size:15.6px;line-height:17.43px;font-weight:400;color:#4d4b49;letter-spacing:0.100px;'>Description</div>
<div class='t' style='left:969.0px;top:376.88px;font-size:15.6px;line-height:17.43px;font-weight:400;color:#4d4b49;letter-spacing:-0.318px;'>Employees</div>
<div class='t' style='left:969.0px;top:410.18px;font-size:15.6px;line-height:17.43px;font-weight:400;color:#4d4b49;letter-spacing:-0.216px;'>Annual Revenue</div>
<div class='t' style='left:312.7px;top:373.86px;font-size:18.5px;line-height:20.66px;font-weight:400;color:#262626;letter-spacing:0.305px;'>Other</div>
<div class='t' style='left:1209.1px;top:406.46px;font-size:18.5px;line-height:20.66px;font-weight:400;color:#262626;letter-spacing:0.062px;'>$10</div>
<div class='t' style='left:73.2px;top:497.26px;font-size:18.5px;line-height:20.66px;font-weight:400;color:#262626;letter-spacing:0.047px;'>Address Information</div>
<div class='t' style='left:73.2px;top:546.98px;font-size:15.6px;line-height:17.43px;font-weight:400;color:#4d4b49;letter-spacing:-0.099px;'>Billing Address</div>
<div class='t' style='left:968.8px;top:546.98px;font-size:15.6px;line-height:17.43px;font-weight:400;color:#4d4b49;letter-spacing:-0.112px;'>Shipping Address</div>
<div class='t' style='left:73.2px;top:602.06px;font-size:18.5px;line-height:20.66px;font-weight:400;color:#262626;letter-spacing:0.043px;'>System Information</div>
<div class='t' style='left:73.0px;top:651.88px;font-size:15.6px;line-height:17.43px;font-weight:400;color:#4d4b49;letter-spacing:-0.335px;'>Created By</div>
<div class='t' style='left:969.0px;top:651.88px;font-size:15.6px;line-height:17.43px;font-weight:400;color:#4d4b49;letter-spacing:-0.099px;'>Last Modified By</div>
<div class='t' style='left:343.0px;top:649.51px;font-size:18px;line-height:20.11px;font-weight:400;color:#006dcc;letter-spacing:-0.066px;'>qa avnio</div>
<div class='t' style='left:410.6px;top:649.06px;font-size:18.5px;line-height:20.66px;font-weight:400;color:#262626;letter-spacing:0.533px;'>, 2/23/2021, 10:56 AM</div>
<div class='t' style='left:1238.5px;top:649.51px;font-size:18px;line-height:20.11px;font-weight:400;color:#006dcc;letter-spacing:-0.066px;'>qa avnio</div>
<div class='t' style='left:1306.4px;top:649.06px;font-size:18.5px;line-height:20.66px;font-weight:400;color:#262626;letter-spacing:0.503px;'>, 2/27/2021, 10:06 AM</div>
<div class='t' style='left:73.4px;top:710.16px;font-size:18.5px;line-height:20.66px;font-weight:400;color:#262626;letter-spacing:-0.407px;'>Custom Links</div>
<div class='t' style='left:73.4px;top:758.26px;font-size:17.5px;line-height:19.55px;font-weight:400;color:#006dcc;letter-spacing:-0.004px;'>Google Search</div>
<div class='t' style='left:670.7px;top:758.26px;font-size:17.5px;line-height:19.55px;font-weight:400;color:#006dcc;letter-spacing:0.231px;'>Google Maps</div>
<div class='t' style='left:1267.8px;top:758.26px;font-size:17.5px;line-height:19.55px;font-weight:400;color:#006dcc;letter-spacing:0.144px;'>Google News</div>
</body></html>
